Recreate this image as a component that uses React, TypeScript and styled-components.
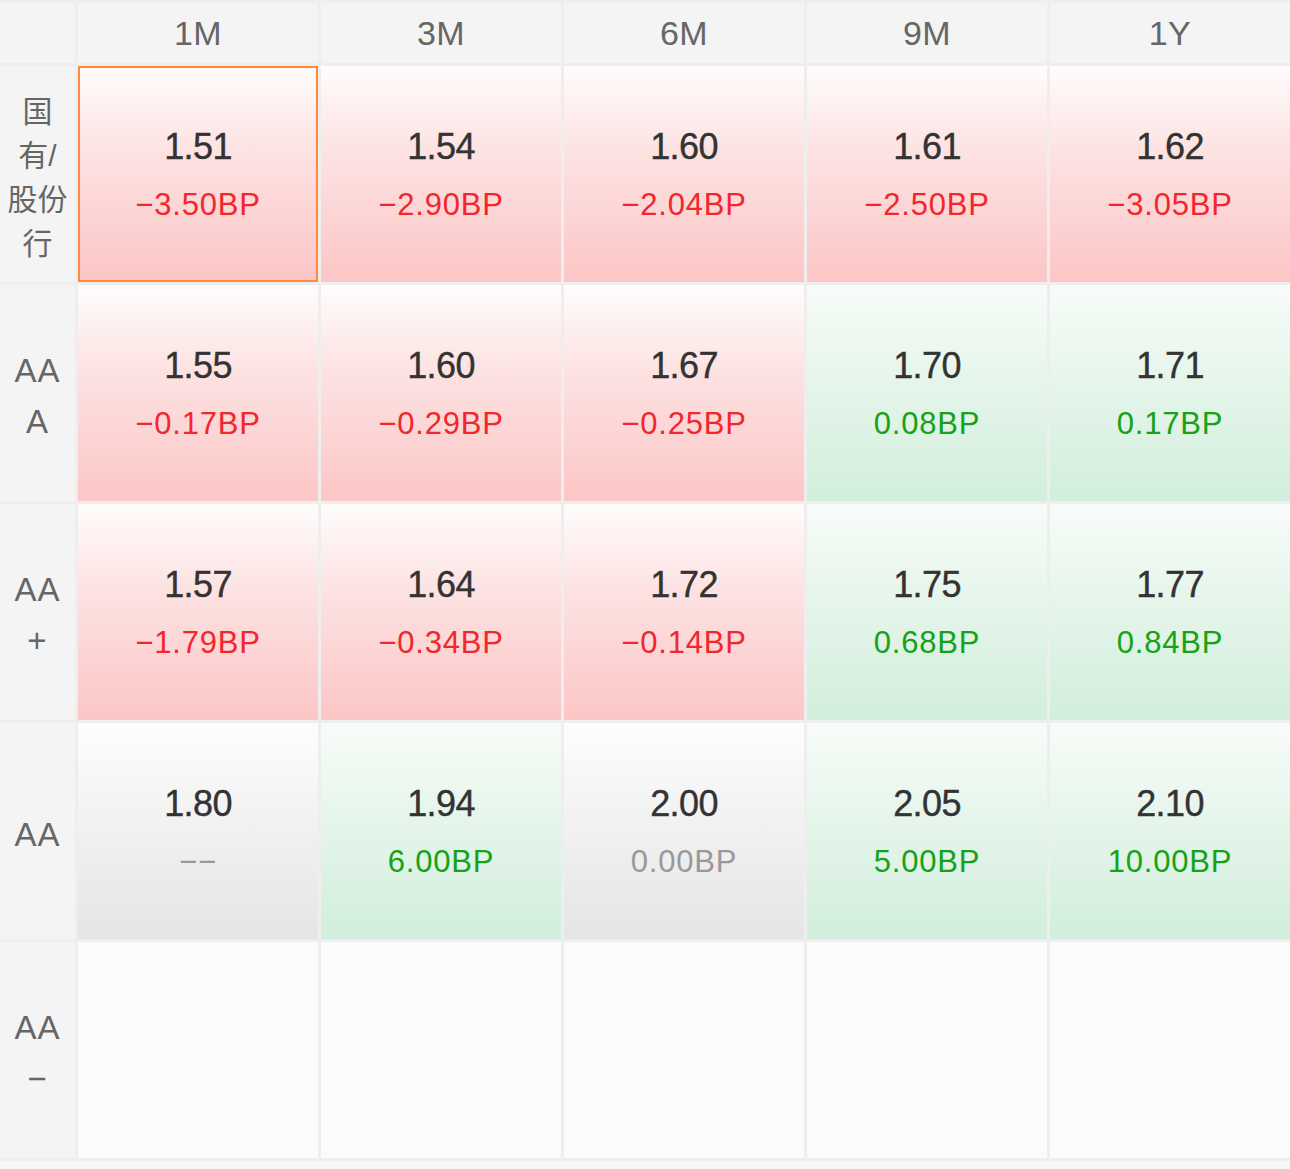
import { Fragment } from "react";
import styled, { createGlobalStyle, css } from "styled-components";

const GlobalStyle = createGlobalStyle`
    html, body {
        margin: 0;
        padding: 0;
        background: #f5f6f8;
        font-family: "Liberation Sans", "Noto Sans CJK SC", sans-serif;
    }
`;

type Trend = "down" | "up" | "flat" | "none";

const Board = styled.div`
    display: grid;
    grid-template-columns: 75px repeat(5, 1fr);
    grid-template-rows: 60px repeat(5, 216px);
    gap: 3px;
    padding: 3px 0;
    background: #eeeeee;
    width: 1290px;
`;

const HeadCell = styled.div`
    display: flex;
    align-items: center;
    justify-content: center;
    background: #f4f4f4;
    color: #666666;
    font-size: 34px;
    letter-spacing: 0.5px;
`;

const LabelCell = styled.div<{ $dense?: boolean }>`
    display: flex;
    align-items: center;
    justify-content: center;
    box-sizing: border-box;
    padding: ${(p) => (p.$dense ? "8px 6px 0" : "6px 6px 0")};
    background: #f4f4f4;
    color: #666666;
    font-size: ${(p) => (p.$dense ? "30px" : "33px")};
    line-height: ${(p) => (p.$dense ? "44px" : "51px")};
    letter-spacing: ${(p) => (p.$dense ? "0" : "1px")};
    text-align: center;
    word-break: break-all;
`;

const fills: Record<Trend, ReturnType<typeof css>> = {
    down: css`background: linear-gradient(to bottom, #fffcfc 0%, #fde2e2 40%, #fcc6c6 100%);`,
    up: css`background: linear-gradient(to bottom, #f8fcf9 0%, #e7f6ec 40%, #d2eedc 100%);`,
    flat: css`background: linear-gradient(to bottom, #fdfdfd 0%, #f3f3f3 40%, #e5e5e5 100%);`,
    none: css`background: #fbfbfb;`,
};

const Cell = styled.div<{ $trend: Trend; $active?: boolean }>`
    display: flex;
    flex-direction: column;
    align-items: center;
    justify-content: center;
    gap: 19px;
    box-sizing: border-box;
    ${(p) => fills[p.$trend]}
    ${(p) => p.$active && css`border: 2px solid #ff8a3d;`}
`;

const Value = styled.div`
    font-size: 36px;
    line-height: 42px;
    color: #333333;
    letter-spacing: -0.6px;
    -webkit-text-stroke: 0.4px #333333;
`;

const Change = styled.div<{ $trend: Trend }>`
    font-size: 31px;
    line-height: 36px;
    letter-spacing: 0.8px;
    color: ${(p) =>
        p.$trend === "down" ? "#f2262c" : p.$trend === "up" ? "#16a216" : "#999999"};
`;

const terms = ["1M", "3M", "6M", "9M", "1Y"];

type Quote = { v: string; c: string; t: Trend };

const rows: { label: string; dense?: boolean; quotes: Quote[] | null }[] = [
    {
        label: "国有/股份行",
        dense: true,
        quotes: [
            { v: "1.51", c: "−3.50BP", t: "down" },
            { v: "1.54", c: "−2.90BP", t: "down" },
            { v: "1.60", c: "−2.04BP", t: "down" },
            { v: "1.61", c: "−2.50BP", t: "down" },
            { v: "1.62", c: "−3.05BP", t: "down" },
        ],
    },
    {
        label: "AAA",
        quotes: [
            { v: "1.55", c: "−0.17BP", t: "down" },
            { v: "1.60", c: "−0.29BP", t: "down" },
            { v: "1.67", c: "−0.25BP", t: "down" },
            { v: "1.70", c: "0.08BP", t: "up" },
            { v: "1.71", c: "0.17BP", t: "up" },
        ],
    },
    {
        label: "AA+",
        quotes: [
            { v: "1.57", c: "−1.79BP", t: "down" },
            { v: "1.64", c: "−0.34BP", t: "down" },
            { v: "1.72", c: "−0.14BP", t: "down" },
            { v: "1.75", c: "0.68BP", t: "up" },
            { v: "1.77", c: "0.84BP", t: "up" },
        ],
    },
    {
        label: "AA",
        quotes: [
            { v: "1.80", c: "−−", t: "flat" },
            { v: "1.94", c: "6.00BP", t: "up" },
            { v: "2.00", c: "0.00BP", t: "flat" },
            { v: "2.05", c: "5.00BP", t: "up" },
            { v: "2.10", c: "10.00BP", t: "up" },
        ],
    },
    { label: "AA−", quotes: null },
];

export default function App() {
    return (
        <>
            <GlobalStyle />
            <Board>
                <HeadCell />
                {terms.map((t) => (
                    <HeadCell key={t}>{t}</HeadCell>
                ))}
                {rows.map((row, ri) => (
                    <Fragment key={row.label}>
                        <LabelCell $dense={row.dense}>{row.label}</LabelCell>
                        {row.quotes
                            ? row.quotes.map((q, ci) => (
                                  <Cell key={ci} $trend={q.t} $active={ri === 0 && ci === 0}>
                                      <Value>{q.v}</Value>
                                      <Change $trend={q.t}>{q.c}</Change>
                                  </Cell>
                              ))
                            : terms.map((t) => <Cell key={t} $trend="none" />)}
                    </Fragment>
                ))}
            </Board>
        </>
    );
}
